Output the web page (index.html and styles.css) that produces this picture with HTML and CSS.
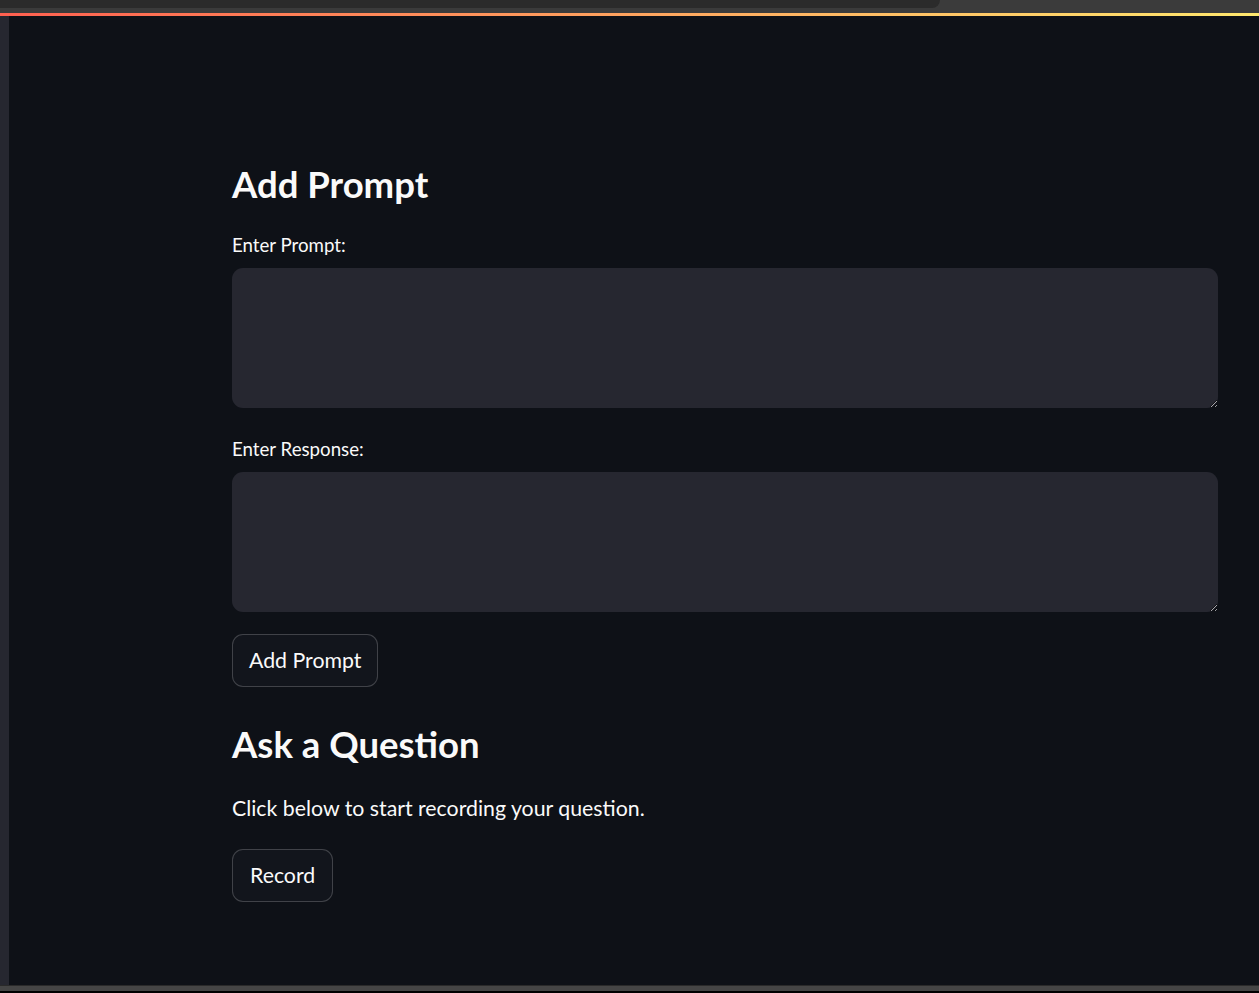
FILE: index.html
```html
<!DOCTYPE html>
<html lang="en">
<head>
<meta charset="utf-8">
<title>Prompt App</title>
<link rel="stylesheet" href="styles.css">
</head>
<body>
<div class="chrome"><div class="chrome-tab"></div></div>
<div class="deco"></div>
<div class="app">
  <div class="sidebar-strip"></div>
  <main class="main">
    <div class="block">
      <h3 class="heading">Add Prompt</h3>
      <div class="field">
        <label class="label">Enter Prompt:</label>
        <textarea class="textarea"></textarea>
      </div>
      <div class="field field-second">
        <label class="label">Enter Response:</label>
        <textarea class="textarea"></textarea>
      </div>
      <button class="btn btn-add">Add Prompt</button>
      <h3 class="heading heading-second">Ask a Question</h3>
      <p class="text">Click below to start recording your question.</p>
      <button class="btn btn-record">Record</button>
    </div>
  </main>
</div>
<div class="footer"></div>
</body>
</html>
```

FILE: styles.css
```css
* { box-sizing: border-box; }
html, body { margin: 0; padding: 0; }
body {
  background: #0e1117;
  color: #fafafa;
  font-family: Lato, "Noto Sans", sans-serif;
  height: 993px;
  overflow: hidden;
  display: flex;
  flex-direction: column;
}
.chrome { height: 13px; background: #3b3b3b; flex: none; }
.chrome-tab { width: 940px; height: 8px; background: #2b2b2b; border-bottom-right-radius: 10px; }
.deco { height: 3px; flex: none; background: linear-gradient(90deg, rgb(255, 96, 80), rgb(255, 232, 110)); }
.app { flex: 1; display: flex; min-height: 0; }
.sidebar-strip { width: 9px; background: #262730; flex: none; }
.main { flex: 1; padding: 0 41px 0 223px; }
.block { display: flex; flex-direction: column; align-items: flex-start; padding-top: 144px; }
.heading { margin: 0; font-size: 36.5px; font-weight: 700; line-height: 48px; color: #fafafa; }
.field { display: flex; flex-direction: column; align-self: stretch; margin-top: 25px; }
.field-second { margin-top: 29px; }
.label { font-size: 18.7px; line-height: 24px; color: #fafafa; }
.textarea {
  margin-top: 11px;
  height: 140px;
  background: #262730;
  border: none;
  border-radius: 11px;
  resize: vertical;
  color: #fafafa;
  font-family: inherit;
  outline: none;
}
.btn {
  margin-top: 22px;
  height: 53px;
  padding: 0 16px 2px;
  background: #12151c;
  border: 1px solid rgba(250, 250, 250, 0.2);
  border-radius: 11px;
  color: #fafafa;
  font-family: inherit;
  font-size: 21.3px;
}
.btn-record { padding: 0 17px 2px; margin-top: 26px; }
.heading-second { margin-top: 33px; }
.text { margin: 25px 0 0; font-size: 21.3px; line-height: 30px; }
.footer { height: 8px; flex: none; background: #454545; border-top: 1px solid #2a2a2a; border-bottom: 2px solid #000; }
```
